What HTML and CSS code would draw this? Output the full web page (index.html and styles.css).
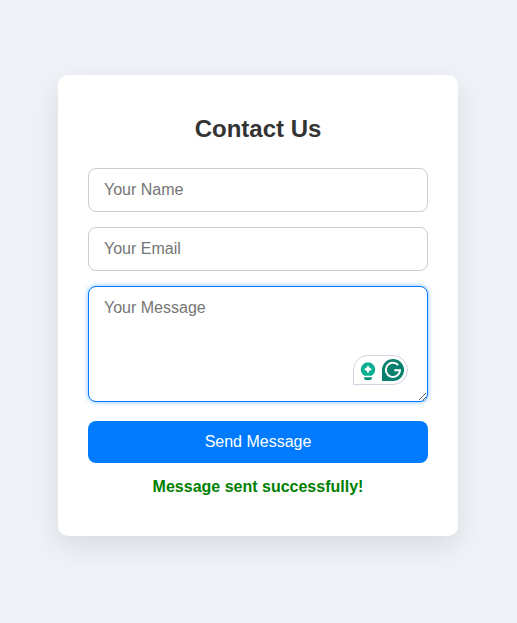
FILE: index.html
```html
<!DOCTYPE html>
<html lang="en">
<head>
<meta charset="utf-8">
<title>Contact Us</title>
<link rel="stylesheet" href="styles.css">
</head>
<body>
<main class="card">
  <h2 class="title">Contact Us</h2>
  <form class="form">
    <input class="field" type="text" placeholder="Your Name">
    <input class="field" type="email" placeholder="Your Email">
    <div class="message">
      <textarea class="field area" placeholder="Your Message"></textarea>
      <div class="assist">
        <svg class="bulb" width="16" height="19" viewBox="0 0 16 19">
          <path d="M8 0.3a7.2 7.2 0 0 0-7.2 7.2c0 3 1.7 4.9 3.5 6.2h7.4c1.8-1.3 3.5-3.2 3.5-6.2A7.2 7.2 0 0 0 8 .3z" fill="#0bb094"/>
          <path d="M8 3.9Q8.7 6.6 11.4 7.3Q8.7 8 8 10.7Q7.3 8 4.6 7.3Q7.3 6.6 8 3.9z" fill="#fff" stroke="#fff" stroke-width="1" stroke-linejoin="round"/>
          <path d="M4 15.2h8v.6a2.2 2.2 0 0 1-2.2 2.2H6.2A2.2 2.2 0 0 1 4 15.800z" fill="#07907b"/>
        </svg>
        <svg class="mark" width="22" height="22" viewBox="0 0 22 22">
          <path d="M11 0a11 11 0 1 1 0 22H0V11A11 11 0 0 1 11 0z" fill="#07806d"/>
          <path d="M16.2 6.1A7.1 7.1 0 1 0 18 11.300h-5.700M18 11.300A7.1 7.1 0 0 1 15.700 16.300" fill="none" stroke="#fff" stroke-width="1.9"/>
        </svg>
      </div>
    </div>
    <button class="send" type="button">Send Message</button>
  </form>
  <p class="status">Message sent successfully!</p>
</main>
</body>
</html>
```
FILE: styles.css
```css
* { box-sizing: border-box; }

body {
  margin: 0;
  min-height: 623px;
  padding: 75px 0 0 58px;
  background: #eff3f8;
  font-family: "Liberation Sans", Arial, sans-serif;
}

.card {
  width: 400px;
  height: 461px;
  padding: 40px 30px;
  background: #fff;
  border-radius: 10px;
  box-shadow: 0 10px 30px rgba(0, 0, 0, 0.1);
}

.title {
  margin: 0 0 25px;
  color: #333;
  font-size: 24px;
  line-height: 28px;
  text-align: center;
}

.form {
  display: flex;
  flex-direction: column;
  gap: 15px;
}

.field {
  display: block;
  width: 100%;
  height: 44px;
  padding: 12px 15px;
  border: 1px solid #ccc;
  border-radius: 8px;
  background: #fff;
  font: 16px/18px "Liberation Sans", Arial, sans-serif;
  outline: none;
}

.field::placeholder { color: #757575; }

.message {
  position: relative;
  margin-bottom: 4px;
}

.area {
  height: 116px;
  resize: vertical;
  border-color: #007bff;
  box-shadow: 0 0 5px rgba(0, 123, 255, 0.5);
}

.assist {
  position: absolute;
  right: 20px;
  bottom: 17px;
  display: flex;
  align-items: center;
  gap: 6px;
  width: 55px;
  height: 30px;
  padding-left: 6px;
  border: 1px solid #d2d3e0;
  border-radius: 15px 15px 15px 0;
  background: #fff;
}

.bulb { margin-top: 2px; }

.send {
  height: 42px;
  padding: 0;
  border: 0;
  border-radius: 8px;
  background: #007bff;
  color: #fff;
  font: 16px/18px "Liberation Sans", Arial, sans-serif;
}

.status {
  margin: 15px 0 0;
  color: green;
  font-size: 16px;
  font-weight: bold;
  line-height: 18px;
  text-align: center;
}
```
